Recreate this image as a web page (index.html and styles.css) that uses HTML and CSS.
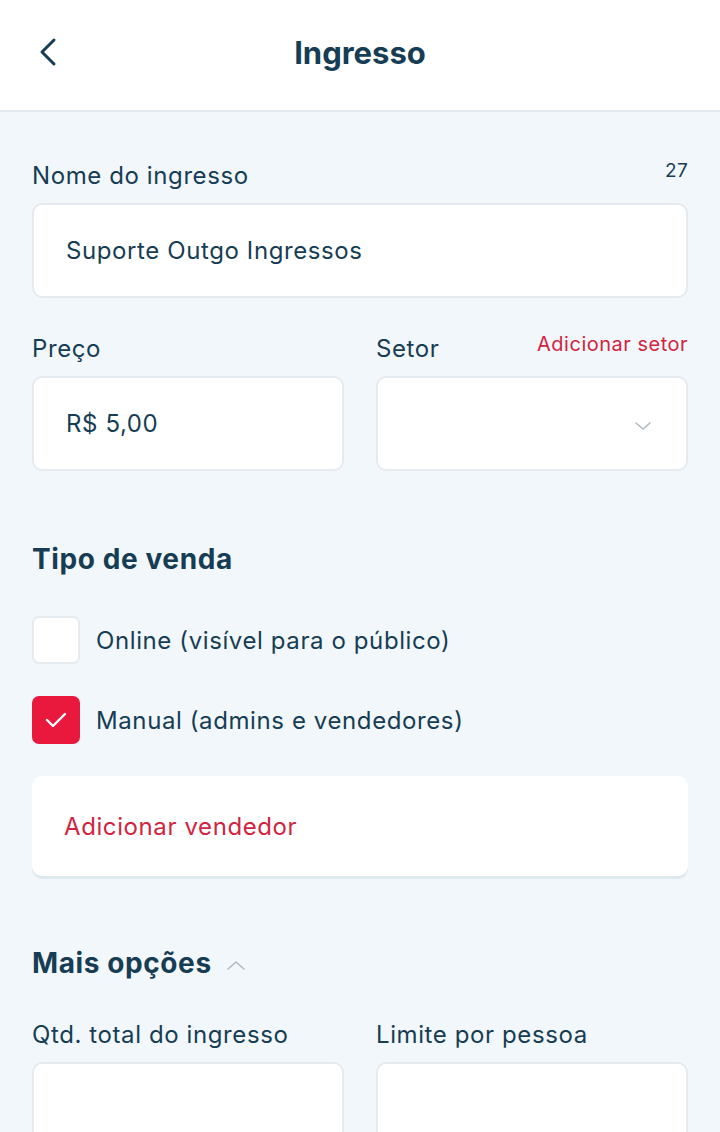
FILE: index.html
```html
<!DOCTYPE html>
<html lang="pt">
<head>
<meta charset="utf-8">
<link rel="stylesheet" href="styles.css">
</head>
<body>
<header class="topbar">
  <button class="back" aria-label="Voltar">
    <svg width="20" height="30" viewBox="0 0 20 30"><path d="M16 3 L4 15 L16 27" fill="none" stroke="#163d54" stroke-width="3" stroke-linecap="round" stroke-linejoin="round"/></svg>
  </button>
  <h1 class="title">Ingresso</h1>
</header>
<main class="content">
  <div class="field">
    <div class="label-row">
      <span class="label">Nome do ingresso</span>
      <span class="counter">27</span>
    </div>
    <div class="input"><span class="value">Suporte Outgo Ingressos</span></div>
  </div>

  <div class="row two">
    <div class="field">
      <div class="label-row"><span class="label">Preço</span></div>
      <div class="input"><span class="value">R$ 5,00</span></div>
    </div>
    <div class="field">
      <div class="label-row"><span class="label">Setor</span><span class="link">Adicionar setor</span></div>
      <div class="input select">
        <svg width="18" height="10" viewBox="0 0 18 10"><path d="M2 2 L9 8 L16 2" fill="none" stroke="#aeb9c3" stroke-width="1.6" stroke-linecap="round" stroke-linejoin="round"/></svg>
      </div>
    </div>
  </div>

  <h2 class="section">Tipo de venda</h2>
  <div class="checks">
    <div class="check"><span class="box"></span><span class="check-label">Online (visível para o público)</span></div>
    <div class="check"><span class="box on"><svg width="24" height="18" viewBox="0 0 24 18"><path d="M3 9 L9 15 L21 3" fill="none" stroke="#fff" stroke-width="2.4" stroke-linecap="round" stroke-linejoin="round"/></svg></span><span class="check-label">Manual (admins e vendedores)</span></div>
  </div>

  <div class="card"><span class="card-link">Adicionar vendedor</span></div>

  <h2 class="section more">Mais opções
    <svg width="20" height="12" viewBox="0 0 20 12"><path d="M2 10 L10 3 L18 10" fill="none" stroke="#aeb9c3" stroke-width="1.6" stroke-linecap="round" stroke-linejoin="round"/></svg>
  </h2>

  <div class="row two last">
    <div class="field">
      <div class="label-row"><span class="label">Qtd. total do ingresso</span></div>
      <div class="input"></div>
    </div>
    <div class="field">
      <div class="label-row"><span class="label">Limite por pessoa</span></div>
      <div class="input"></div>
    </div>
  </div>
</main>
</body>
</html>
```
FILE: styles.css
```css
* { box-sizing: border-box; margin: 0; padding: 0; }
html, body { height: 100%; }
body {
  font-family: Inter, "Noto Sans", sans-serif;
  background: #f2f7fb;
  color: #163d54;
  letter-spacing: 0.6px;
  overflow: hidden;
}
.topbar {
  height: 112px;
  background: #fff;
  border-bottom: 2px solid #e3e9ee;
  display: flex;
  align-items: center;
  justify-content: center;
  position: relative;
}
.back {
  position: absolute;
  left: 36px;
  top: 36px;
  background: none;
  border: 0;
  width: 24px;
  height: 32px;
  display: flex;
  align-items: center;
  justify-content: center;
}
.title {
  font-size: 31px;
  font-weight: 700;
  letter-spacing: 0;
  margin-top: -5px;
}
.content {
  padding: 47px 32px 0;
  display: flex;
  flex-direction: column;
}
.field { display: flex; flex-direction: column; }
.label-row {
  display: flex;
  justify-content: space-between;
  align-items: baseline;
  height: 31px;
  padding-top: 2px;
  margin-bottom: 13px;
}
.label { font-size: 24px; font-weight: 400; }
.counter { font-size: 19px; letter-spacing: 0.3px; align-self: flex-start; line-height: 20px; }
.link { font-size: 20px; color: #d0243f; letter-spacing: 0.5px; align-self: flex-start; line-height: 20px; }
.input {
  height: 95px;
  background: #fff;
  border: 2px solid #e4eaef;
  border-radius: 10px;
  display: flex;
  align-items: center;
  padding: 0 32px;
}
.value { font-size: 24px; }
.select { justify-content: flex-end; padding-right: 34px; padding-top: 4px; }
.row.two {
  display: grid;
  grid-template-columns: 1fr 1fr;
  gap: 32px;
  margin-top: 34px;
}
.row.two.last { margin-top: 38px; }
.section {
  font-size: 28px;
  font-weight: 700;
  margin-top: 71px;
  height: 34px;
  display: flex;
  align-items: center;
  gap: 14px;
}
.checks {
  display: flex;
  flex-direction: column;
  gap: 32px;
  margin-top: 40px;
}
.check { display: flex; align-items: center; gap: 16px; }
.box {
  width: 48px; height: 48px;
  background: #fff;
  border: 2px solid #e6ebef;
  border-radius: 7px;
  display: flex; align-items: center; justify-content: center;
}
.box.on { background: #e8193c; border-color: #e8193c; }
.check-label { font-size: 24px; }
.card {
  margin-top: 32px;
  height: 100px;
  background: #fff;
  border-radius: 10px;
  box-shadow: 0 3px 0 #dfe9f0;
  display: flex;
  align-items: center;
  padding: 0 32px;
}
.card-link { font-size: 24px; color: #d0243f; }
.more { margin-top: 70px; }
.more svg { margin-top: 4px; }
```
